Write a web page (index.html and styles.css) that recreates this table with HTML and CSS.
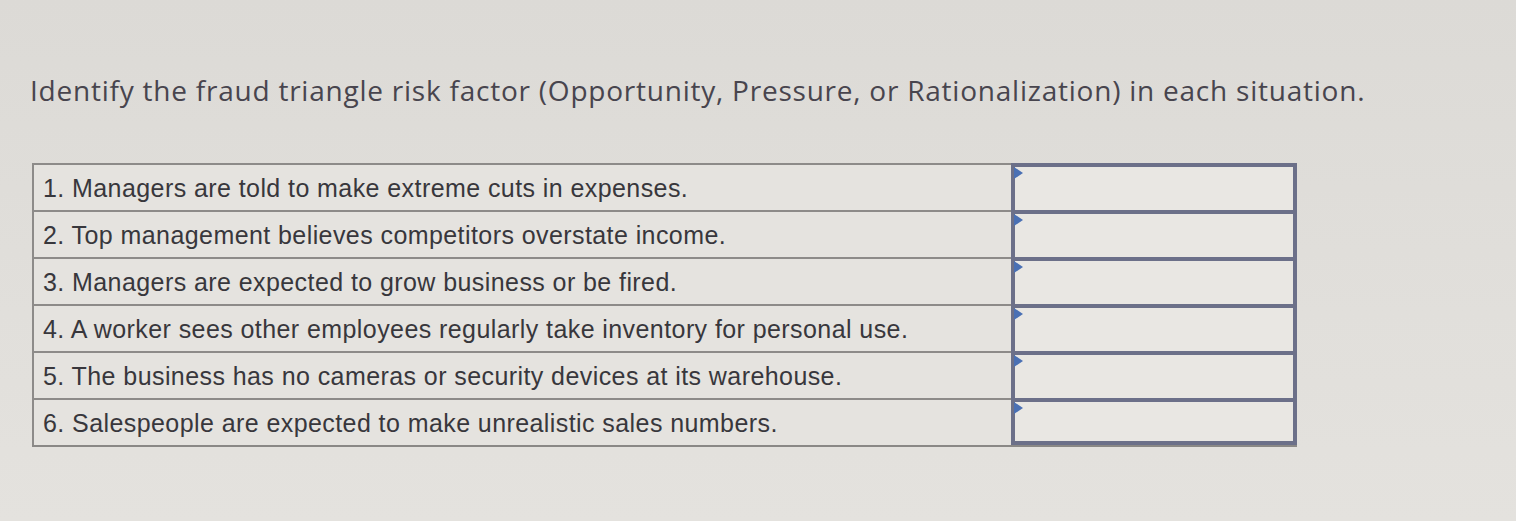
FILE: index.html
```html
<!DOCTYPE html>
<html>
<head>
<meta charset="utf-8">
<link rel="stylesheet" href="styles.css">
</head>
<body>
<div class="page">
  <h1 class="title">Identify the fraud triangle risk factor (Opportunity, Pressure, or Rationalization) in each situation.</h1>
  <div class="table">
    <div class="row"><div class="q">1. Managers are told to make extreme cuts in expenses.</div><div class="a"><div class="box"><span class="flag"></span></div></div></div>
    <div class="row"><div class="q">2. Top management believes competitors overstate income.</div><div class="a"><div class="box"><span class="flag"></span></div></div></div>
    <div class="row"><div class="q">3. Managers are expected to grow business or be fired.</div><div class="a"><div class="box"><span class="flag"></span></div></div></div>
    <div class="row"><div class="q">4. A worker sees other employees regularly take inventory for personal use.</div><div class="a"><div class="box"><span class="flag"></span></div></div></div>
    <div class="row"><div class="q">5. The business has no cameras or security devices at its warehouse.</div><div class="a"><div class="box"><span class="flag"></span></div></div></div>
    <div class="row"><div class="q">6. Salespeople are expected to make unrealistic sales numbers.</div><div class="a"><div class="box"><span class="flag"></span></div></div></div>
  </div>
</div>
</body>
</html>
```
FILE: styles.css
```css
html, body {
  margin: 0;
  padding: 0;
  background: #e1dfdb;
}
.page {
  width: 1516px;
  height: 521px;
  padding: 71px 0 0 30px;
  box-sizing: border-box;
  background: linear-gradient(180deg, #dcdad6 0%, #e1dfdb 60%, #e4e2de 100%);
}
.title {
  margin: 0;
  font-family: "Open Sans", "Noto Sans", sans-serif;
  font-weight: 500;
  font-size: 28px;
  line-height: 38px;
  color: #48454e;
  letter-spacing: 0.77px;
}
.table {
  margin-top: 54px;
  margin-left: 2px;
  width: 1265px;
  display: flex;
  flex-direction: column;
  border-bottom: 2px solid #8a8886;
}
.row {
  display: flex;
  height: 47px;
}
.q {
  width: 979px;
  box-sizing: border-box;
  border-left: 2px solid #8d8b89;
  border-top: 2px solid #8d8b89;
  padding: 6px 0 0 9px;
  font-family: "Liberation Sans", Arial, sans-serif;
  font-size: 25px;
  line-height: 34px;
  letter-spacing: 0.42px;
  color: #38373c;
  background: #e5e3df;
}
.a {
  flex: 1;
  display: flex;
}
.box {
  position: relative;
  flex: 1;
  border: 4px solid #6c7089;
  border-bottom-width: 0;
  background: #e9e7e3;
}
.row:last-child .box {
  border-bottom-width: 4px;
}
.flag {
  position: absolute;
  left: -1px;
  top: 0;
  width: 0;
  height: 0;
  border-top: 6px solid transparent;
  border-bottom: 6px solid transparent;
  border-left: 9px solid #4a70b4;
}
```
